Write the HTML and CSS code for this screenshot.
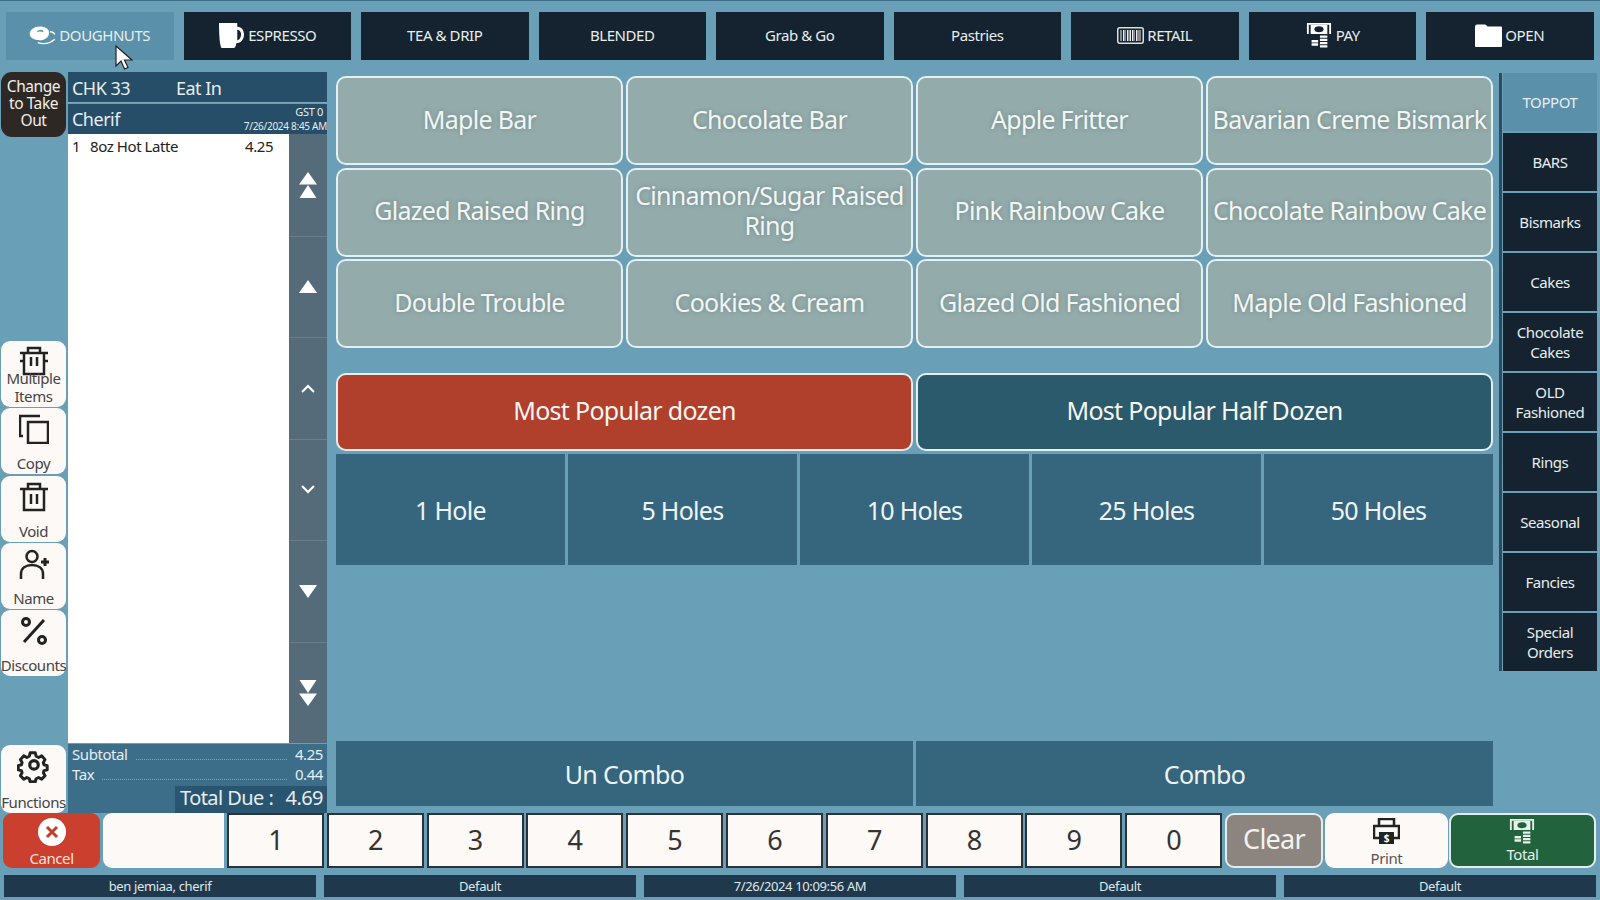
FILE: index.html
```html
<!DOCTYPE html>
<html lang="en">
<head>
    <meta charset="UTF-8">
    <title>POS Register</title>
    <link rel="stylesheet" href="styles.css">
</head>
<body>
    <svg class="defs" width="0" height="0">
        <symbol id="cash" viewBox="0 0 28 28">
            <path fill="currentColor" d="M1 1h26v12h-2V3H3v10H1z"/>
            <path fill="currentColor" fill-rule="evenodd" d="M5 3h18v10H5zM14 4.500c-3 0-5 1.300-5 3.200s2 3.300 5 3.300 5-1.400 5-3.300-2-3.200-5-3.200z"/>
            <path fill="currentColor" d="M15 14.500h8v2.500h-8zM15 18h8v2.500h-8zM15 21.500h8V24h-8zM15 25h8v2.500h-8zM6 19.500h7V22H6zM6 23h7v2.500H6z"/>
        </symbol>
    </svg>

    <nav class="top-nav">
        <button class="nav-btn active">
            <svg class="nav-icon doughnut" viewBox="0 0 28 20"><path fill="#fff" fill-rule="evenodd" d="M11 .5c5.500 0 10 2.500 10 6.500 0 4.500-4.500 8-10 8S.5 12.500.5 8.500C.5 4 5.500.5 11 .5zm1.500 3.500C10.500 4 8 5 8 6.500c1.500-1 4.500-1.200 7 0C15 5 14 4 12.500 4z"/><path fill="none" stroke="#fff" stroke-width="1.500" d="M9 17.500c6 2 12 1.500 18-3.500M22 6c2 0 4 1 5 3"/></svg>
            DOUGHNUTS
        </button>
        <button class="nav-btn">
            <svg class="nav-icon mug" viewBox="0 0 28 26"><path fill="#fff" fill-rule="evenodd" d="M1 0h19v4c4 0 7 3 7 8s-3 9-8 9c-.5 3-1 5-3 5H4c-2 0-3-13-3-26zm19 7v11c2 0 4-3 4-6s-2-5-4-5z"/></svg>
            ESPRESSO
        </button>
        <button class="nav-btn">TEA &amp; DRIP</button>
        <button class="nav-btn">BLENDED</button>
        <button class="nav-btn">Grab &amp; Go</button>
        <button class="nav-btn">Pastries</button>
        <button class="nav-btn">
            <svg class="nav-icon barcode" viewBox="0 0 27 17"><rect x=".75" y=".75" width="25.500" height="15.500" rx="2" fill="none" stroke="#ddd" stroke-width="1.500"/><path stroke="#eee" d="M4 3v11M6.500 3v11M8 3v11M10.500 3v11M12 3v11M13.500 3v11M15.500 3v11M17 3v11M19.500 3v11M21 3v11M23 3v11"/></svg>
            RETAIL
        </button>
        <button class="nav-btn">
            <svg class="nav-icon pay"><use href="#cash"/></svg>
            PAY
        </button>
        <button class="nav-btn">
            <svg class="nav-icon folder" viewBox="0 0 27 23"><path fill="#fff" d="M0 3c0-1.500 1-2.500 2-2.500h8c1 0 1.500 1 2.500 2H26c.5 0 1 .5 1 1V22c0 .5-.5 1-1 1H1c-.5 0-1-.5-1-1z"/></svg>
            OPEN
        </button>
    </nav>

    <main class="main">
        <aside class="side-rail">
            <button class="rail-btn take-out">Change to Take Out</button>
            <div class="rail-group">
                <button class="rail-btn multi">
                    <svg class="rail-icon" viewBox="0 0 30 30"><path fill="none" stroke="#222" stroke-width="2.500" d="M1 7h28M9 7V2h12v5M5 7v21h20V7"/><path stroke="#222" stroke-width="2.500" d="M12 11v9M18 11v9M1 15h3M26 15h3"/></svg>
                    <span>Multiple Items</span>
                </button>
                <button class="rail-btn">
                    <svg class="rail-icon" viewBox="0 0 30 30"><path fill="none" stroke="#222" stroke-width="2.500" d="M21 2H1v20h3"/><rect x="9" y="8" width="20" height="21" fill="none" stroke="#222" stroke-width="2.500"/></svg>
                    <span>Copy</span>
                </button>
                <button class="rail-btn">
                    <svg class="rail-icon" viewBox="0 0 30 30"><path fill="none" stroke="#222" stroke-width="2.500" d="M1 7h28M9 7V2h12v5M5 7v21h20V7"/><path stroke="#222" stroke-width="2.500" d="M12 12v10M18 12v10"/></svg>
                    <span>Void</span>
                </button>
                <button class="rail-btn">
                    <svg class="rail-icon" viewBox="0 0 30 30"><circle cx="13" cy="7.500" r="5.500" fill="none" stroke="#222" stroke-width="2.500"/><path fill="none" stroke="#222" stroke-width="2.500" d="M2 30v-5c0-6 5-9 11-9s11 3 11 9v5"/><path stroke="#222" stroke-width="3" d="M26 9v8M22 13h8"/></svg>
                    <span>Name</span>
                </button>
                <button class="rail-btn">
                    <svg class="rail-icon" viewBox="0 0 30 30"><circle cx="7" cy="6" r="3.500" fill="none" stroke="#222" stroke-width="3"/><circle cx="23" cy="24" r="3.500" fill="none" stroke="#222" stroke-width="3"/><path stroke="#222" stroke-width="3" d="M25 4L5 26"/></svg>
                    <span>Discounts</span>
                </button>
            </div>
            <button class="rail-btn functions">
                <svg class="rail-icon" viewBox="0 0 32 32"><path fill="none" stroke="#222" stroke-width="3.500" stroke-linejoin="round" d="M13 2h6l1 4 3 1.500 3.500-2 4 4.500-2 3.500.8 2.500 3.700 1v5l-3.700 1-.8 2.500 2 3.500-4 4-3.500-2-3 1.500-1 3.500h-6l-1-3.500-3-1.500-3.500 2-4-4 2-3.500-.8-2.500-3.700-1v-5l3.700-1 .8-2.500-2-3.500 4-4.500 3.500 2 3-1.500z" transform="translate(2 2) scale(.8)"/><circle cx="16" cy="15" r="4" fill="none" stroke="#222" stroke-width="3"/></svg>
                <span>Functions</span>
            </button>
        </aside>

        <section class="ticket">
            <div class="ticket-head">
                <span class="chk">CHK 33</span>
                <span>Eat In</span>
            </div>
            <div class="ticket-sub">
                <span>Cherif</span>
                <div class="ticket-meta">
                    <span class="gst">GST 0</span>
                    <span>7/26/2024 8:45 AM</span>
                </div>
            </div>
            <div class="ticket-body">
                <div class="ticket-lines">
                    <div class="line">
                        <span class="qty">1</span>
                        <span class="desc">8oz Hot Latte</span>
                        <span class="amt">4.25</span>
                    </div>
                </div>
                <div class="scroller">
                    <div class="scroll-btn">
                        <svg width="18" height="26" viewBox="0 0 18 26"><path fill="#fff" d="M9 0l9 12.500H0zM9 13l8.500 13H.5z"/></svg>
                    </div>
                    <div class="scroll-btn">
                        <svg width="18" height="13" viewBox="0 0 18 13"><path fill="#fff" d="M9 0l9 13H0z"/></svg>
                    </div>
                    <div class="scroll-btn">
                        <svg width="14" height="9" viewBox="0 0 14 9"><path fill="none" stroke="#fff" stroke-width="2.200" d="M1 8l6-6 6 6"/></svg>
                    </div>
                    <div class="scroll-btn">
                        <svg width="14" height="9" viewBox="0 0 14 9"><path fill="none" stroke="#fff" stroke-width="2.200" d="M1 1l6 6 6-6"/></svg>
                    </div>
                    <div class="scroll-btn">
                        <svg width="18" height="13" viewBox="0 0 18 13"><path fill="#fff" d="M0 0h18L9 13z"/></svg>
                    </div>
                    <div class="scroll-btn">
                        <svg width="18" height="26" viewBox="0 0 18 26"><path fill="#fff" d="M.5 0h17L9 13zM0 13.500h18L9 26z"/></svg>
                    </div>
                </div>
            </div>
            <div class="totals">
                <div class="total-row"><span>Subtotal</span><i class="dots"></i><span>4.25</span></div>
                <div class="total-row"><span>Tax</span><i class="dots"></i><span>0.44</span></div>
                <div class="total-due"><span>Total Due :</span><span>4.69</span></div>
            </div>
        </section>

        <section class="center">
            <div class="items">
                <button class="item">Maple Bar</button>
                <button class="item">Chocolate Bar</button>
                <button class="item">Apple Fritter</button>
                <button class="item">Bavarian Creme Bismark</button>
                <button class="item">Glazed Raised Ring</button>
                <button class="item">Cinnamon/Sugar Raised Ring</button>
                <button class="item">Pink Rainbow Cake</button>
                <button class="item">Chocolate Rainbow Cake</button>
                <button class="item">Double Trouble</button>
                <button class="item">Cookies &amp; Cream</button>
                <button class="item">Glazed Old Fashioned</button>
                <button class="item">Maple Old Fashioned</button>
            </div>
            <div class="popular">
                <button class="pop-btn red">Most Popular dozen</button>
                <button class="pop-btn teal">Most Popular Half Dozen</button>
            </div>
            <div class="holes">
                <button class="flat-btn">1 Hole</button>
                <button class="flat-btn">5 Holes</button>
                <button class="flat-btn">10 Holes</button>
                <button class="flat-btn">25 Holes</button>
                <button class="flat-btn">50 Holes</button>
            </div>
            <div class="combos">
                <button class="flat-btn">Un Combo</button>
                <button class="flat-btn">Combo</button>
            </div>
        </section>

        <aside class="cat-rail">
            <button class="cat-btn active">TOPPOT</button>
            <button class="cat-btn">BARS</button>
            <button class="cat-btn">Bismarks</button>
            <button class="cat-btn">Cakes</button>
            <button class="cat-btn">Chocolate Cakes</button>
            <button class="cat-btn">OLD Fashioned</button>
            <button class="cat-btn">Rings</button>
            <button class="cat-btn">Seasonal</button>
            <button class="cat-btn">Fancies</button>
            <button class="cat-btn">Special Orders</button>
        </aside>
    </main>

    <div class="keypad">
        <button class="action cancel">
            <svg width="28" height="28" viewBox="0 0 28 28"><circle cx="14" cy="14" r="14" fill="#fff"/><path stroke="#c23c2a" stroke-width="3" d="M9 9l10 10M19 9L9 19"/></svg>
            <span>Cancel</span>
        </button>
        <div class="entry"></div>
        <button class="key">1</button>
        <button class="key">2</button>
        <button class="key">3</button>
        <button class="key">4</button>
        <button class="key">5</button>
        <button class="key">6</button>
        <button class="key">7</button>
        <button class="key">8</button>
        <button class="key">9</button>
        <button class="key">0</button>
        <button class="action clear">Clear</button>
        <button class="action print">
            <svg width="27" height="27" viewBox="0 0 27 27"><path fill="none" stroke="#222" stroke-width="2.500" d="M6 8V1h15v7M6 20H1V8h25v12h-5"/><rect x="6" y="14" width="15" height="12" fill="#222"/><text class="print-sign" x="13.500" y="24">$</text></svg>
            <span>Print</span>
        </button>
        <button class="action total">
            <svg class="total-icon"><use href="#cash"/></svg>
            <span>Total</span>
        </button>
    </div>

    <footer class="status-bar">
        <span>ben jemiaa, cherif</span>
        <span>Default</span>
        <span>7/26/2024 10:09:56 AM</span>
        <span>Default</span>
        <span>Default</span>
    </footer>

    <svg class="cursor" width="18" height="25" viewBox="0 0 18 25"><path fill="#fff" stroke="#222" stroke-width="1.200" d="M1 1v20l5-5 3.500 8 3.500-1.500-3.500-7.500H17z"/></svg>
</body>
</html>
```

FILE: styles.css
```css
* {
    box-sizing: border-box;
    letter-spacing: -0.028em;
}
html, body {
    margin: 0;
    height: 100%;
}
body {
    position: relative;
    width: 1600px;
    height: 900px;
    overflow: hidden;
    background-color: #6a9fb8;
    border-top: 1px solid #3a6f8a;
    font-family: "Noto Sans", "Open Sans", Arial, sans-serif;
}
button {
    font-family: inherit;
    border: none;
    padding: 0;
    color: inherit;
}
.defs {
    position: absolute;
}

/* top menu */
.top-nav {
    display: grid;
    grid-template-columns: repeat(9, 167.5px);
    column-gap: 10px;
    height: 48px;
    margin: 11px 0 0 6px;
}
.nav-btn {
    display: flex;
    align-items: center;
    justify-content: center;
    gap: 3px;
    padding-bottom: 2px;
    background-color: #14232f;
    color: #e8eeee;
    font-size: 15px;
}
.nav-btn.active {
    background-color: #5a90aa;
}
.nav-icon {
    flex: none;
}
.doughnut { width: 27px; height: 19px; }
.mug { width: 27px; height: 25px; }
.barcode { width: 27px; height: 17px; }
.pay { width: 28px; height: 26px; color: #fff; }
.folder { width: 27px; height: 23px; }

/* main area */
.main {
    display: flex;
    height: 741px;
    margin: 12px 0 0 1px;
}

.side-rail {
    display: flex;
    flex-direction: column;
    width: 65px;
    margin-right: 2px;
}
.rail-btn {
    display: flex;
    flex-direction: column;
    align-items: center;
    justify-content: space-between;
    height: 66px;
    padding: 6px 0 2px;
    background-color: #fdf9f7;
    color: #444;
    border-radius: 9px;
    font-size: 15px;
    line-height: 18px;
    white-space: normal;
}
.rail-icon {
    width: 30px;
    height: 30px;
    flex: none;
}
.take-out {
    justify-content: center;
    height: 65px;
    background-color: #2e2825;
    color: #f2eeea;
    font-size: 15.500px;
    line-height: 17px;
    padding: 0 6px 2px;
    border-radius: 11px;
}
.rail-group {
    display: flex;
    flex-direction: column;
    gap: 1.300px;
    margin-top: 204px;
}
.multi {
    padding-top: 5px;
}
.multi span {
    margin-top: -12px;
}
.functions {
    margin-top: auto;
    height: 68px;
    padding-top: 4px;
}
.functions .rail-icon {
    width: 34px;
    height: 34px;
}

/* ticket */
.ticket {
    display: flex;
    flex-direction: column;
    width: 259px;
    margin-right: 9px;
    color: #e6eef0;
}
.ticket-head {
    display: flex;
    height: 31px;
    align-items: center;
    padding: 2px 0 0 4px;
    background-color: #264e68;
    font-size: 18px;
    border-bottom: 1px solid #7fa9bd;
}
.chk {
    width: 104px;
}
.ticket-sub {
    display: flex;
    justify-content: space-between;
    height: 30px;
    margin-top: 1px;
    padding-left: 4px;
    background-color: #264e68;
    font-size: 18px;
    line-height: 31px;
}
.ticket-meta {
    display: flex;
    flex-direction: column;
    align-items: flex-end;
    font-size: 10px;
    line-height: 14px;
    padding-top: 1px;
}
.gst {
    font-size: 11px;
    padding-right: 4px;
}
.ticket-body {
    display: flex;
    height: 609px;
}
.ticket-lines {
    flex: 1;
    padding: 2px 4px;
    background-color: #fff;
    color: #222;
    font-size: 15px;
    line-height: 20px;
}
.line {
    display: flex;
}
.qty {
    width: 18px;
}
.desc {
    width: 155px;
}
.scroller {
    display: grid;
    grid-template-rows: repeat(6, 1fr);
    width: 38px;
    background-color: #556b7a;
}
.scroll-btn {
    display: flex;
    align-items: center;
    justify-content: center;
    border-top: 1px solid #677e8c;
}
.scroll-btn:first-child {
    border-top: none;
}
.totals {
    flex: 1;
    display: flex;
    flex-direction: column;
    margin-top: 1px;
    background-color: #3c6e8a;
    font-size: 15px;
    line-height: 20px;
}
.total-row {
    display: flex;
    align-items: center;
    gap: 8px;
    padding: 0 4px;
}
.dots {
    flex: 1;
    height: 12px;
    border-bottom: 1px dotted #7ea3b6;
}
.total-due {
    display: flex;
    justify-content: space-between;
    width: 152px;
    margin: auto 0 0 auto;
    padding: 0 4px 3px 5px;
    background-color: #2a5570;
    font-size: 20px;
    line-height: 24px;
}

/* product buttons */
.center {
    display: flex;
    flex-direction: column;
    width: 1157px;
    margin-right: 6px;
    padding: 4px 0 7px;
}
.items {
    display: grid;
    grid-template-columns: repeat(4, 287px);
    grid-auto-rows: 89px;
    gap: 2.500px 3px;
}
.item {
    background-color: #93abab;
    border: 2px solid #e6f0f2;
    border-radius: 10px;
    color: #f2f6f4;
    font-size: 25px;
    line-height: 30px;
    padding: 0 4px 4px;
    text-shadow: 0 0 4px rgba(70, 90, 90, 0.4);
}
.popular {
    display: grid;
    grid-template-columns: repeat(2, 577px);
    gap: 3px;
    height: 78px;
    margin-top: 25px;
}
.pop-btn {
    border: 2px solid #e6eeee;
    border-radius: 10px;
    color: #f6f6f2;
    font-size: 25px;
    padding-bottom: 4px;
}
.red {
    background-color: #b03f2c;
}
.teal {
    background-color: #2b5a6c;
}
.flat-btn {
    background-color: #35667d;
    color: #eef4f6;
    font-size: 25px;
}
.holes {
    display: grid;
    grid-template-columns: repeat(5, 1fr);
    gap: 3px;
    height: 111px;
    margin-top: 3px;
}
.combos {
    display: grid;
    grid-template-columns: repeat(2, 577px);
    gap: 3px;
    height: 65px;
    margin-top: auto;
}

/* category rail */
.cat-rail {
    display: flex;
    flex-direction: column;
    gap: 2px;
    width: 98px;
    height: 598px;
    margin-top: 1px;
    border-left: 3px solid #2f4a5a;
    padding-left: 1px;
}
.cat-btn {
    flex: none;
    height: 58px;
    background-color: #14232f;
    color: #e8eeee;
    font-size: 15px;
    line-height: 20px;
    padding: 0 6px;
}
.cat-btn.active {
    background-color: #5a90aa;
}

/* bottom keypad */
.keypad {
    display: flex;
    height: 55px;
    margin-left: 3px;
}
.action {
    display: flex;
    flex-direction: column;
    align-items: center;
    justify-content: center;
    border-radius: 9px;
    font-size: 15px;
    line-height: 18px;
}
.cancel {
    width: 97px;
    margin-right: 3px;
    background-color: #ca3f2d;
    color: #f8e4dc;
    padding-top: 4px;
    gap: 3px;
}
.entry {
    width: 121px;
    margin-right: 3px;
    background-color: #fdf9f7;
    border-radius: 9px 0 0 9px;
}
.key {
    width: 97px;
    margin-right: 2.800px;
    padding-bottom: 3px;
    background-color: #fdf9f7;
    border: 2px solid #2c3338;
    color: #333;
    font-size: 27px;
}
.clear {
    width: 98px;
    margin-right: 2px;
    padding-bottom: 3px;
    background-color: #8c857f;
    border: 2px solid #e4ecee;
    color: #f4f2ee;
    font-size: 27px;
}
.print {
    justify-content: flex-start;
    width: 123px;
    margin-right: 1px;
    background-color: #fdf9f7;
    color: #555;
    gap: 4px;
    padding-top: 5px;
}
.print-sign {
    fill: #fff;
    font-size: 10px;
    font-weight: 700;
    text-anchor: middle;
}
.total {
    width: 147px;
    background-color: #22633e;
    border: 2px solid #e4ecee;
    color: #e8f0ea;
    gap: 1px;
}
.total-icon {
    width: 28px;
    height: 26px;
}

/* status bar */
.status-bar {
    display: grid;
    grid-template-columns: repeat(5, 312px);
    gap: 8px;
    height: 22px;
    margin: 7px 0 0 4px;
    color: #dfe8ec;
    font-size: 13px;
    line-height: 22px;
    text-align: center;
}
.status-bar span {
    background-color: #20384c;
}

.cursor {
    position: absolute;
    left: 115px;
    top: 44px;
}
```
